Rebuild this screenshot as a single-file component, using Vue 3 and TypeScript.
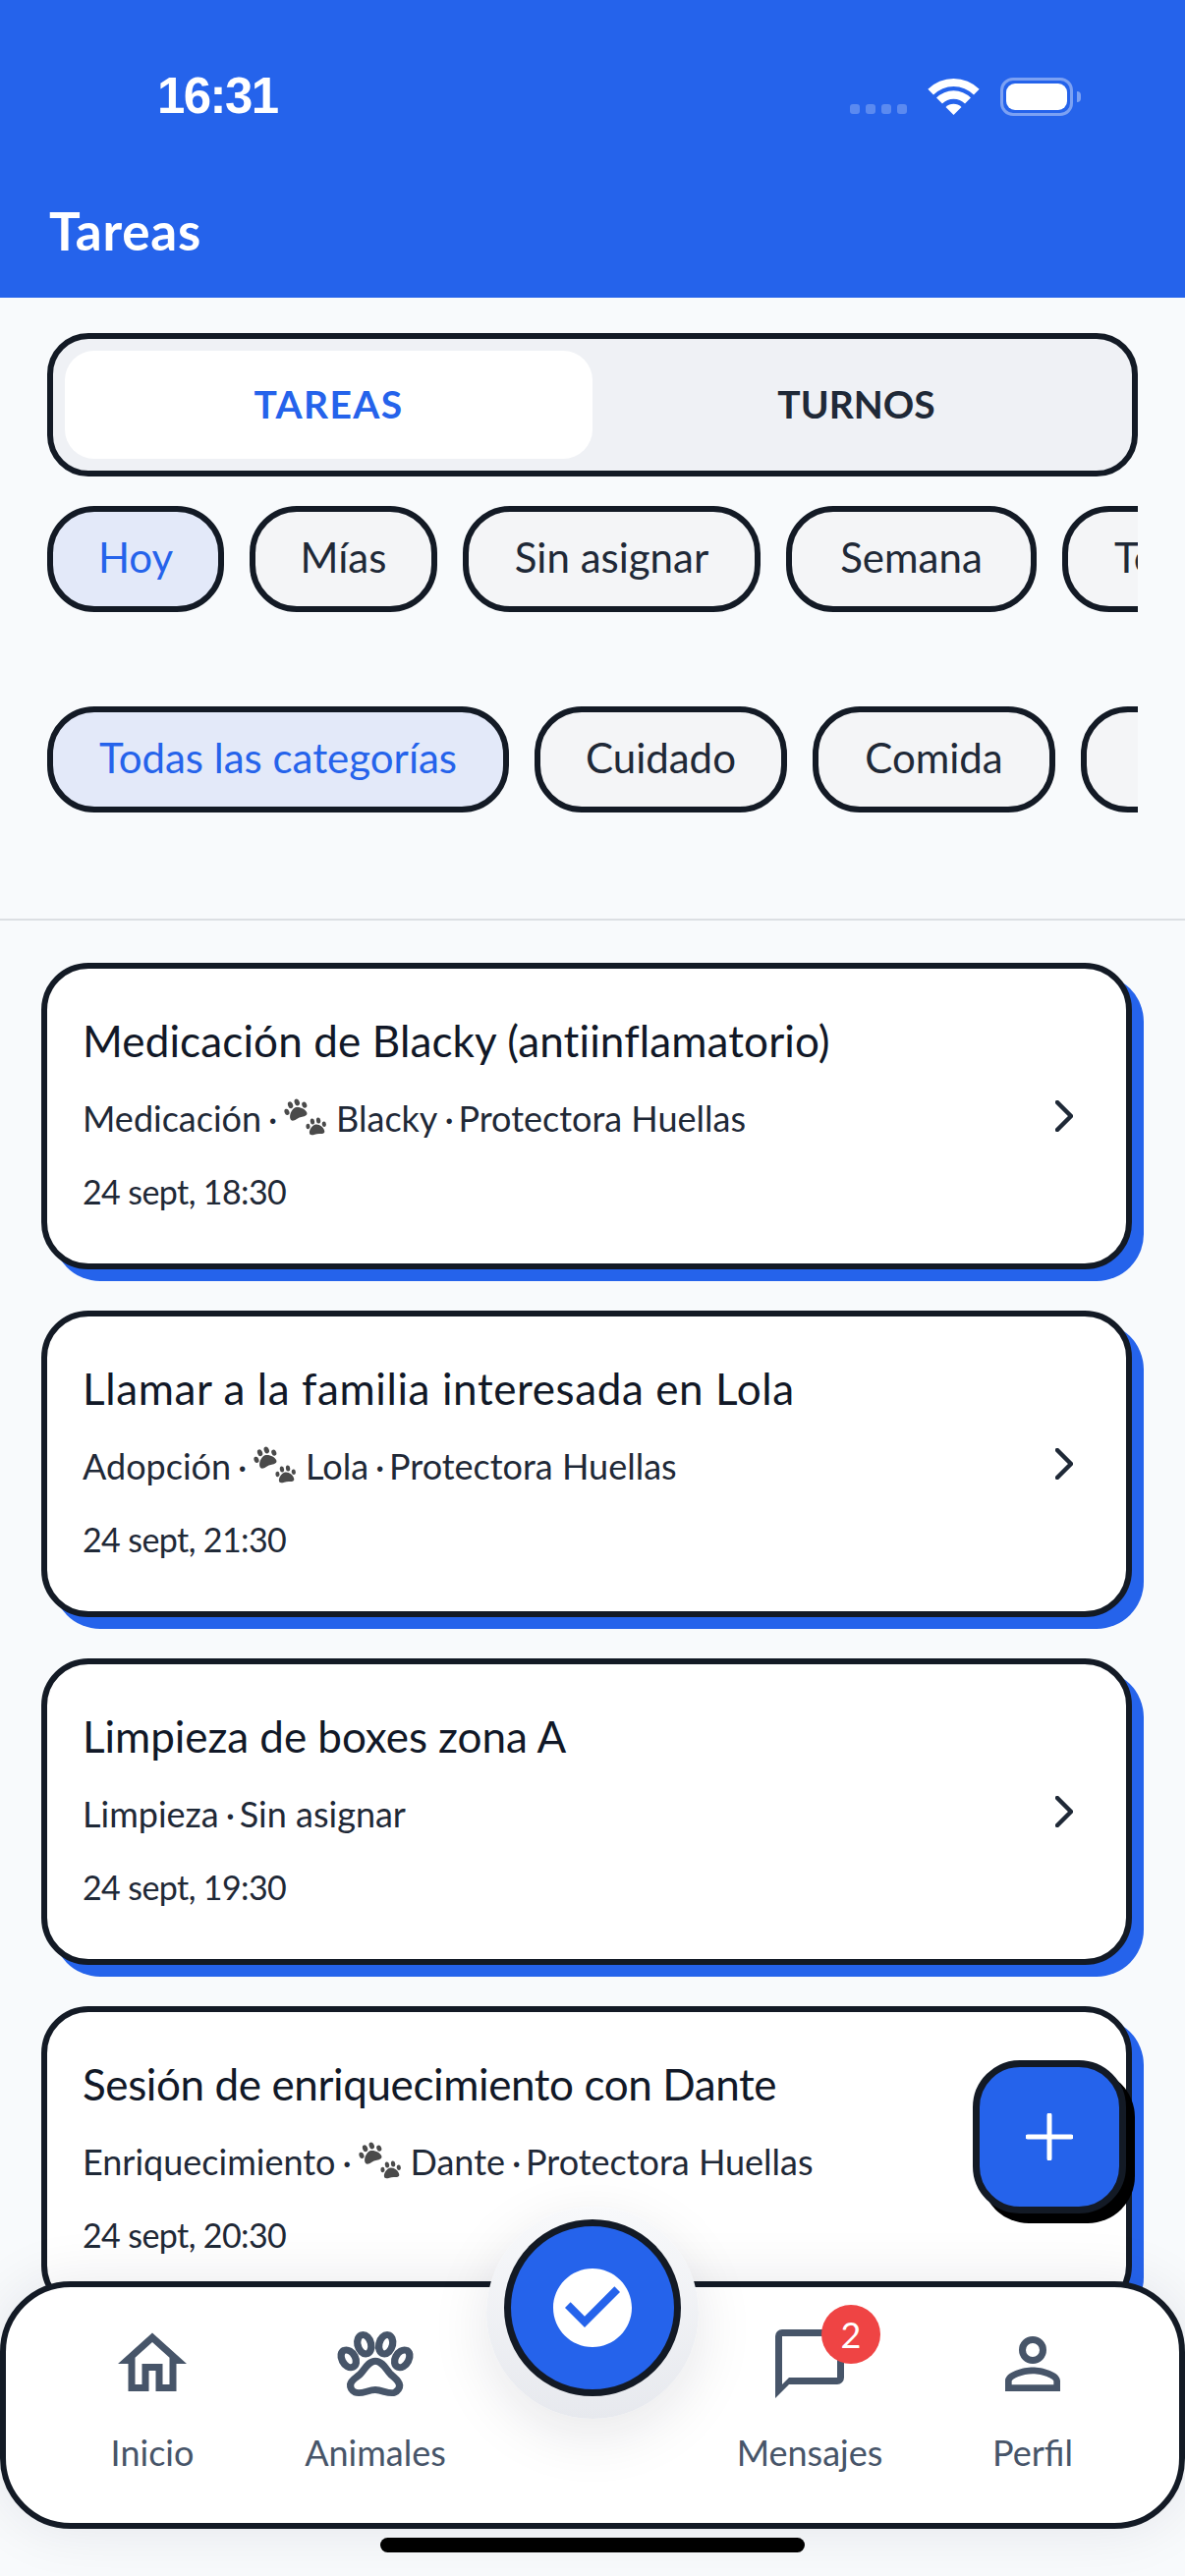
<template>
  <div class="screen">
    <header class="header">
      <div class="status-bar">
        <span class="time">16:31</span>
        <div class="status-icons">
          <div class="signal"><i v-for="n in 4" :key="n"></i></div>
          <svg class="wifi" width="51" height="37" viewBox="0 0 51 37">
            <path d="M-.66 10.84A37 37 0 0 1 51.66 10.84L46 16.5A29 29 0 0 0 5 16.5Z" />
            <path d="M8.03 19.53A24.7 24.7 0 0 1 42.97 19.53L37.03 25.47A16.3 16.3 0 0 0 13.97 25.47Z" />
            <path d="M17.5 29A11.3 11.3 0 0 1 33.5 29L25.5 37Z" />
          </svg>
          <div class="battery"><div class="battery-level"></div></div>
          <div class="battery-cap"></div>
        </div>
      </div>
      <h1 class="title">Tareas</h1>
    </header>

    <div class="segment">
      <div class="segment-item active">TAREAS</div>
      <div class="segment-item">TURNOS</div>
    </div>

    <div class="chips chips-first">
      <div
        v-for="(chip, i) in periodChips"
        :key="chip.label"
        class="chip"
        :class="{ active: i === 0 }"
        :style="{ width: chip.width + 'px' }"
      >
        {{ chip.label }}
      </div>
    </div>
    <div class="chips chips-second">
      <div
        v-for="(chip, i) in categoryChips"
        :key="chip.label"
        class="chip"
        :class="{ active: i === 0 }"
        :style="{ width: chip.width + 'px' }"
      >
        {{ chip.label }}
      </div>
    </div>

    <div class="divider"></div>

    <div class="task-list">
      <div v-for="task in tasks" :key="task.title" class="task-card">
        <div class="task-body">
          <div class="task-title" :style="{ letterSpacing: task.tracking + 'px' }">{{ task.title }}</div>
          <div class="task-meta">
            <span>{{ task.category }}</span>
            <span class="dot">·</span>
            <template v-if="task.animal">
              <svg class="paw-emoji" width="45" height="42" viewBox="0 0 45 42">
                <g v-for="p in pawPrints" :key="p.transform" :transform="p.transform">
                  <path d="M0 -4C4 -4 9 1 9 5C9 8 6 8 3 7.4C1 7 -1 7 -3 7.4C-6 8 -9 8 -9 5C-9 1 -4 -4 0 -4Z" />
                  <ellipse cx="-9.6" cy="-3" rx="2.4" ry="3.2" />
                  <ellipse cx="-3.6" cy="-8.2" rx="2.5" ry="3.5" />
                  <ellipse cx="3.6" cy="-8.2" rx="2.5" ry="3.5" />
                  <ellipse cx="9.6" cy="-3" rx="2.4" ry="3.2" />
                </g>
              </svg>
              <span>{{ task.animal }}</span>
              <span class="dot">·</span>
            </template>
            <span>{{ task.owner }}</span>
          </div>
          <div class="task-date">{{ task.date }}</div>
        </div>
        <svg class="chevron" width="18" height="32" viewBox="0 0 18 32">
          <path d="M2 2L16 16L2 30" />
        </svg>
      </div>
    </div>

    <button class="fab">
      <svg width="48" height="48" viewBox="0 0 48 48">
        <path d="M24 2V46M2 24H46" />
      </svg>
    </button>

    <nav class="tab-bar">
      <div v-for="tab in tabs" :key="tab.label" class="tab" :style="{ gridColumn: tab.column }">
        <div class="tab-icon">
          <svg v-if="tab.outlined" width="84" height="84" viewBox="0 0 24 24" class="stroked"><path :d="tab.icon" /></svg>
          <svg v-else width="84" height="84" viewBox="0 0 24 24"><path :d="tab.icon" /></svg>
          <span v-if="tab.badge" class="badge">{{ tab.badge }}</span>
        </div>
        <span class="tab-label">{{ tab.label }}</span>
      </div>
    </nav>

    <div class="center-halo">
      <div class="center-button">
        <svg width="96" height="96" viewBox="0 0 24 24">
          <path d="M12 2C6.5 2 2 6.5 2 12S6.5 22 12 22 22 17.5 22 12 17.5 2 12 2M10 17L5 12L6.41 10.59L10 14.17L17.59 6.58L19 8L10 17Z" />
        </svg>
      </div>
    </div>

    <div class="home-indicator"></div>
  </div>
</template>

<script setup lang="ts">
interface Task {
  title: string;
  tracking: number;
  category: string;
  animal?: string;
  owner: string;
  date: string;
}

interface Chip {
  label: string;
  width: number;
}

interface Tab {
  label: string;
  icon: string;
  column: number;
  outlined?: boolean;
  badge?: number;
}

const periodChips: Chip[] = [
  { label: 'Hoy', width: 180 },
  { label: 'Mías', width: 191 },
  { label: 'Sin asignar', width: 303 },
  { label: 'Semana', width: 255 },
  { label: 'Todas', width: 212 }
];
const categoryChips: Chip[] = [
  { label: 'Todas las categorías', width: 470 },
  { label: 'Cuidado', width: 257 },
  { label: 'Comida', width: 247 },
  { label: 'Limpieza', width: 290 }
];

const tasks: Task[] = [
  { title: 'Medicación de Blacky (antiinflamatorio)', tracking: 0.13, category: 'Medicación', animal: 'Blacky', owner: 'Protectora Huellas', date: '24 sept, 18:30' },
  { title: 'Llamar a la familia interesada en Lola', tracking: 0.6, category: 'Adopción', animal: 'Lola', owner: 'Protectora Huellas', date: '24 sept, 21:30' },
  { title: 'Limpieza de boxes zona A', tracking: -0.05, category: 'Limpieza', owner: 'Sin asignar', date: '24 sept, 19:30' },
  { title: 'Sesión de enriquecimiento con Dante', tracking: -0.4, category: 'Enriquecimiento', animal: 'Dante', owner: 'Protectora Huellas', date: '24 sept, 20:30' }
];

const pawPrints = [
  { transform: 'translate(15 14) rotate(-22)' },
  { transform: 'translate(35 31) rotate(-8) scale(.86)' }
];

const tabs: Tab[] = [
  { label: 'Inicio', column: 1, icon: 'M12 5.69L17 10.19V18H15V12H9V18H7V10.19L12 5.69M12 3L2 12H5V20H11V14H13V20H19V12H22L12 3Z' },
  {
    label: 'Animales',
    column: 2,
    outlined: true,
    icon: 'M8.35,3.6C9.4,3.45 10.5,4.6 10.8,6.1C11.1,7.6 10.55,8.95 9.55,9.1C8.5,9.25 7.45,8.15 7.1,6.6C6.8,5.1 7.35,3.75 8.35,3.6M15.5,3.6C16.5,3.75 17.05,5.1 16.75,6.6C16.4,8.15 15.35,9.25 14.3,9.1C13.3,8.95 12.75,7.6 13.05,6.1C13.35,4.6 14.45,3.45 15.5,3.6M3.4,8.1C4.4,7.7 5.6,8.45 6.3,9.8C6.95,11.15 6.75,12.5 5.8,12.95C4.8,13.35 3.55,12.6 2.9,11.25C2.2,9.9 2.45,8.5 3.4,8.1M20.6,8.1C21.55,8.5 21.8,9.9 21.1,11.25C20.45,12.6 19.2,13.35 18.2,12.95C17.25,12.5 17.05,11.15 17.7,9.8C18.4,8.45 19.6,7.7 20.6,8.1M18.7,18.3C18.75,19.1 18.15,20 17.4,20.3C15.9,21 14,19.6 12,19.6C10,19.6 8.1,21 6.4,20.3C5.5,19.9 5,18.9 5.1,18C5.25,16.7 6.8,16 7.8,15C9.1,13.7 10,11.2 12,11.2C14,11.2 15,13.65 16.2,15C17.2,16.05 18.65,16.9 18.7,18.3Z'
  },
  { label: 'Mensajes', column: 4, badge: 2, icon: 'M20,2H4A2,2 0 0,0 2,4V22L6,18H20A2,2 0 0,0 22,16V4A2,2 0 0,0 20,2M20,16H6L4,18V4H20' },
  { label: 'Perfil', column: 5, icon: 'M12,4A4,4 0 0,1 16,8A4,4 0 0,1 12,12A4,4 0 0,1 8,8A4,4 0 0,1 12,4M12,6A2,2 0 0,0 10,8A2,2 0 0,0 12,10A2,2 0 0,0 14,8A2,2 0 0,0 12,6M12,13C14.67,13 20,14.33 20,17V20H4V17C4,14.33 9.33,13 12,13M12,14.9C9.03,14.9 5.9,16.36 5.9,17V18.1H18.1V17C18.1,16.36 14.97,14.9 12,14.9Z' }
];
</script>

<style>
html,
body {
  margin: 0;
  background: #f8fafc;
}
</style>

<style scoped>
.screen {
  position: relative;
  width: 1206px;
  height: 2622px;
  overflow: hidden;
  background: #f8fafc;
  font-family: Lato, "Noto Sans", sans-serif;
  color: #111827;
}

.header {
  height: 303px;
  box-sizing: border-box;
  padding-top: 78px;
  background: #2563eb;
  color: #fff;
}

.status-bar {
  display: flex;
  justify-content: space-between;
  align-items: center;
  height: 40px;
  padding: 0 106px 0 160px;
}

.time {
  font-family: "Liberation Sans", sans-serif;
  font-weight: 700;
  font-size: 51px;
  line-height: 40px;
  letter-spacing: -1.6px;
}

.status-icons {
  display: flex;
  align-items: center;
  height: 40px;
}

.signal {
  display: flex;
  gap: 6px;
  align-self: flex-end;
  margin: 0 22px 2px 0;
}

.signal i {
  width: 10px;
  height: 10px;
  border-radius: 3px;
  background: rgba(255, 255, 255, 0.25);
}

.wifi {
  overflow: visible;
  fill: #fff;
  margin-right: 22px;
}

.battery {
  width: 74px;
  height: 39px;
  box-sizing: border-box;
  padding: 3px;
  border: 3px solid rgba(255, 255, 255, 0.4);
  border-radius: 13px;
}

.battery-level {
  height: 100%;
  border-radius: 9px;
  background: #fff;
}

.battery-cap {
  width: 4px;
  height: 11px;
  margin-left: 4px;
  border-radius: 0 4px 4px 0;
  background: rgba(255, 255, 255, 0.4);
}

.title {
  margin: 87px 0 0 50px;
  font-size: 53px;
  font-weight: 700;
  line-height: 60px;
  letter-spacing: 0.8px;
}

.segment {
  display: flex;
  width: 1110px;
  height: 146px;
  box-sizing: border-box;
  margin: 36px 0 0 48px;
  padding: 12px;
  border: 6px solid #131a25;
  border-radius: 42px;
  background: #eff1f5;
}

.segment-item {
  flex: 1;
  display: flex;
  align-items: center;
  justify-content: center;
  padding-bottom: 2px;
  border-radius: 30px;
  font-size: 39px;
  font-weight: 700;
  color: #1f2937;
}

.segment-item.active {
  background: #fff;
  color: #2563eb;
  letter-spacing: 1.4px;
}

.chips {
  display: flex;
  gap: 26px;
  width: 1110px;
  margin-left: 48px;
  overflow: hidden;
}

.chips-first {
  margin-top: 30px;
}

.chips-second {
  margin-top: 96px;
}

.chip {
  flex-shrink: 0;
  height: 108px;
  box-sizing: border-box;
  border: 6px solid #131a25;
  border-radius: 48px;
  background: #f4f5f7;
  font-size: 42px;
  line-height: 93px;
  text-align: center;
  color: #1f2937;
}

.chip.active {
  background: #e3e9f9;
  color: #2563eb;
}

.divider {
  height: 2px;
  margin-top: 108px;
  background: #dcdfe3;
}

.task-list {
  display: flex;
  flex-direction: column;
  gap: 42px;
  margin: 43px 0 0 42px;
}

.task-card {
  display: flex;
  align-items: center;
  justify-content: space-between;
  width: 1110px;
  height: 312px;
  flex-shrink: 0;
  box-sizing: border-box;
  padding: 0 54px 0 36px;
  border: 6px solid #131a25;
  border-radius: 48px;
  background: #fff;
  box-shadow: 12px 12px 0 #2563eb;
}

.task-body {
  padding-bottom: 5px;
}

.task-title {
  font-size: 44px;
  line-height: 54px;
  color: #111827;
}

.task-meta {
  display: flex;
  align-items: center;
  gap: 7px;
  margin-top: 29px;
  font-size: 36px;
  line-height: 46px;
  color: #1f2937;
  white-space: nowrap;
}

.dot {
  width: 7px;
  text-align: center;
}

.task-date {
  margin-top: 29px;
  font-size: 34px;
  line-height: 46px;
  letter-spacing: -0.6px;
  color: #1f2937;
}

.paw-emoji {
  flex-shrink: 0;
  margin-right: 3px;
  fill: #4a4a4a;
}

.chevron {
  fill: none;
  stroke: #1f2937;
  stroke-width: 4.5;
  stroke-linecap: round;
  stroke-linejoin: round;
}

.fab {
  position: absolute;
  left: 990px;
  top: 2097px;
  display: flex;
  align-items: center;
  justify-content: center;
  width: 156px;
  height: 156px;
  box-sizing: border-box;
  padding: 0;
  border: 7px solid #131a25;
  border-radius: 48px;
  background: #2563eb;
  box-shadow: 9px 10px 0 #000;
}

.fab svg {
  fill: none;
  stroke: #fff;
  stroke-width: 5;
  stroke-linecap: round;
}

.tab-bar {
  position: absolute;
  left: 0;
  right: 0;
  top: 2322px;
  display: grid;
  grid-template-columns: 227px 227px 215px 227px 227px;
  justify-content: center;
  height: 252px;
  box-sizing: border-box;
  border: 6px solid #131a25;
  border-radius: 72px;
  background: #fff;
  box-shadow: 0 0 60px rgba(15, 23, 42, 0.09);
}

.tab {
  display: flex;
  flex-direction: column;
  align-items: center;
  padding-top: 36px;
  color: #475569;
}

.tab-icon {
  position: relative;
  height: 84px;
}

.tab-icon svg {
  display: block;
  fill: #475569;
}

.tab-icon svg.stroked {
  fill: none;
  stroke: #475569;
  stroke-width: 2;
  stroke-linejoin: round;
  transform: scaleX(1.05);
}

.badge {
  position: absolute;
  top: -18px;
  right: -30px;
  width: 60px;
  height: 60px;
  border-radius: 50%;
  background: #ef4444;
  color: #fff;
  font-size: 36px;
  line-height: 60px;
  text-align: center;
}

.tab-label {
  margin-top: 25px;
  font-size: 36px;
  line-height: 46px;
}

.center-halo {
  position: absolute;
  left: 495px;
  top: 2246px;
  display: flex;
  justify-content: center;
  width: 216px;
  height: 216px;
  box-sizing: border-box;
  padding-top: 13px;
  border-radius: 50%;
  background: linear-gradient(#f8f9fb, #e7e9ee);
  box-shadow: 0 16px 60px rgba(15, 23, 42, 0.1);
}

.center-button {
  display: flex;
  align-items: center;
  justify-content: center;
  width: 180px;
  height: 180px;
  box-sizing: border-box;
  border: 7px solid #131a25;
  border-radius: 50%;
  background: #2563eb;
}

.center-button svg {
  fill: #fff;
}

.home-indicator {
  position: absolute;
  left: 387px;
  top: 2583px;
  width: 432px;
  height: 15px;
  border-radius: 8px;
  background: #000;
}
</style>
